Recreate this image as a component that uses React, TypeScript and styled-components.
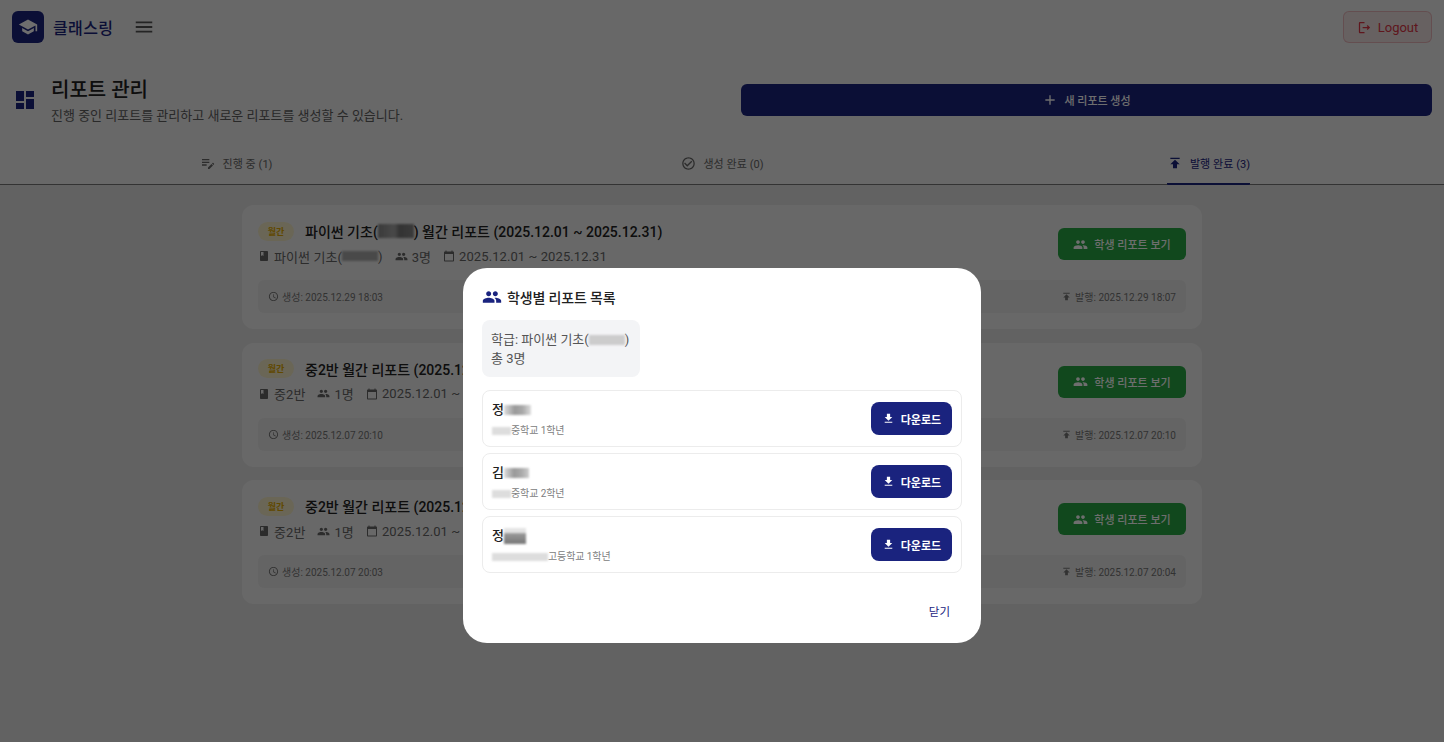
import styled, { createGlobalStyle } from 'styled-components';
import {
  MdAccessTime,
  MdAdd,
  MdBook,
  MdCalendarToday,
  MdCheckCircleOutline,
  MdDashboard,
  MdDownload,
  MdEditNote,
  MdMenu,
  MdOutlineLogout,
  MdPeople,
  MdPublish,
  MdSchool,
} from 'react-icons/md';

const NAVY = '#1a237e';
const FONT = 'Roboto, "Noto Sans CJK KR", sans-serif';

const GlobalStyle = createGlobalStyle`
  html, body {
    margin: 0;
    padding: 0;
    background: #e4e4e4;
    font-family: ${FONT};
    overflow: hidden;
  }
  * {
    box-sizing: border-box;
  }
`;

const Page = styled.div`
  width: 1444px;
  height: 742px;
  display: flex;
  flex-direction: column;
`;

const TopArea = styled.div`
  background: #f0f0f0;
  border-bottom: 1px solid #777;
  height: 185px;
  display: flex;
  flex-direction: column;
`;

// 헤더
const Header = styled.header`
  height: 54px;
  display: flex;
  align-items: center;
  justify-content: space-between;
  padding: 0 12px;
`;

const Brand = styled.div`
  display: flex;
  align-items: center;
`;

const LogoBox = styled.div`
  width: 32px;
  height: 32px;
  border-radius: 6px;
  background: ${NAVY};
  color: #fff;
  display: flex;
  align-items: center;
  justify-content: center;
`;

const BrandName = styled.span`
  margin-left: 9px;
  font-size: 16px;
  font-weight: 500;
  letter-spacing: 0.4px;
  color: ${NAVY};
`;

const MenuButton = styled.div`
  margin-left: 20px;
  color: #555;
  display: flex;
`;

const LogoutButton = styled.div`
  width: 89px;
  height: 32px;
  border-radius: 6px;
  border: 1px solid rgba(220, 53, 69, 0.25);
  background: rgba(220, 53, 69, 0.08);
  color: #dc3545;
  font-size: 13px;
  display: flex;
  align-items: center;
  justify-content: center;
  gap: 6px;
`;

// 페이지 제목
const TitleRow = styled.div`
  height: 92px;
  display: flex;
  align-items: flex-start;
  padding: 23px 12px 0 15px;
`;

const TitleIcon = styled.div`
  color: ${NAVY};
  width: 36px;
  margin-top: 13px;
  display: flex;
`;

const TitleBlock = styled.div`
  width: 690px;
  display: flex;
  flex-direction: column;
`;

const PageTitle = styled.h1`
  margin: 0;
  font-size: 20px;
  font-weight: 500;
  line-height: 26px;
  color: #212121;
`;

const PageSubtitle = styled.p`
  margin: 3px 0 0;
  font-size: 13px;
  line-height: 20px;
  color: #5f5f5f;
`;

const CreateButton = styled.div`
  flex: 1;
  height: 32px;
  margin-top: 7px;
  border-radius: 6px;
  background: ${NAVY};
  color: #fff;
  font-size: 11px;
  font-weight: 500;
  display: flex;
  align-items: center;
  justify-content: center;
  gap: 6px;
`;

// 탭
const TabBar = styled.div`
  flex: 1;
  display: grid;
  grid-template-columns: 472px 501px 471px;
`;

const TabCell = styled.div`
  display: flex;
  justify-content: center;
`;

const Tab = styled.div<{ $active?: boolean }>`
  display: flex;
  align-items: center;
  gap: 7px;
  font-size: 11px;
  letter-spacing: 0.05px;
  color: ${p => (p.$active ? NAVY : '#666')};
  border-bottom: 2px solid ${p => (p.$active ? NAVY : 'transparent')};
  margin-bottom: -1px;
  border-radius: 0 0 1px 1px;
  padding-bottom: 3px;
`;

// 리포트 카드
const CardList = styled.main`
  display: flex;
  flex-direction: column;
  gap: 13.5px;
  width: 960px;
  margin: 20px 0 0 242px;
`;

const Card = styled.article`
  height: 124px;
  border-radius: 12px;
  background: #f2f2f2;
  padding: 16px;
  display: flex;
  flex-direction: column;
`;

const CardTop = styled.div`
  display: flex;
  justify-content: space-between;
  height: 59px;
`;

const CardInfo = styled.div`
  display: flex;
  flex-direction: column;
`;

const CardTitleRow = styled.div`
  display: flex;
  align-items: center;
  height: 20px;
  gap: 11px;
`;

const Badge = styled.span`
  width: 36px;
  height: 19px;
  border-radius: 10px;
  background: #f5ecc8;
  color: #e0a800;
  font-size: 9px;
  font-weight: 700;
  display: flex;
  align-items: center;
  justify-content: center;
`;

const CardTitle = styled.span`
  font-size: 14px;
  font-weight: 500;
  color: #212121;
  white-space: nowrap;
  display: flex;
  align-items: center;
`;

const MetaRow = styled.div`
  display: flex;
  align-items: center;
  margin-top: 5px;
  gap: 12px;
  height: 20px;
  font-size: 13px;
  letter-spacing: 0.08px;
  color: #666;
`;

const MetaItem = styled.span`
  display: flex;
  align-items: center;
  gap: 4px;
`;

const ViewButton = styled.div`
  width: 128px;
  height: 32px;
  margin-top: 7px;
  border-radius: 6px;
  background: #28a745;
  color: #fff;
  font-size: 11px;
  font-weight: 500;
  display: flex;
  align-items: center;
  justify-content: center;
  gap: 6px;
`;

const CardFooter = styled.div`
  height: 33px;
  border-radius: 6px;
  background: #e8e8e8;
  padding: 0 10px;
  display: flex;
  align-items: center;
  justify-content: space-between;
  font-size: 10px;
  color: #757575;
`;

const FooterItem = styled.span`
  display: flex;
  align-items: center;
  gap: 3px;
`;

// 모달
const Backdrop = styled.div`
  position: fixed;
  inset: 0;
  background: rgba(0, 0, 0, 0.57);
  display: flex;
  justify-content: center;
  align-items: flex-start;
  padding-top: 268px;
`;

const Modal = styled.section`
  width: 518px;
  height: 375px;
  border-radius: 24px;
  background: #fff;
  padding: 19px 19px 0;
  display: flex;
  flex-direction: column;
`;

const ModalTitle = styled.h2`
  margin: 0;
  height: 20px;
  font-size: 14px;
  font-weight: 500;
  letter-spacing: -0.15px;
  color: #212121;
  display: flex;
  align-items: center;
  gap: 5px;

  svg {
    color: ${NAVY};
  }
`;

const ClassInfo = styled.div`
  align-self: flex-start;
  width: 158px;
  height: 57px;
  margin-top: 13px;
  border-radius: 8px;
  background: #f3f4f6;
  padding: 10px 9px;
  font-size: 13px;
  line-height: 19px;
  color: #555;
`;

const InfoLine = styled.div`
  display: flex;
  align-items: center;
  white-space: nowrap;
`;

const StudentList = styled.div`
  margin-top: 13px;
  display: flex;
  flex-direction: column;
  gap: 6px;
`;

const StudentRow = styled.div`
  height: 57px;
  border: 1px solid #ececec;
  border-radius: 8px;
  padding: 0 9px;
  display: flex;
  align-items: center;
  justify-content: space-between;
`;

const StudentText = styled.div`
  padding-top: 2px;
`;

const StudentName = styled.div`
  font-size: 13px;
  font-weight: 500;
  line-height: 18px;
  color: #212121;
  display: flex;
  align-items: center;
`;

const StudentSchool = styled.div`
  margin-top: 5px;
  font-size: 10px;
  line-height: 14px;
  letter-spacing: -0.1px;
  color: #808080;
  display: flex;
  align-items: center;
`;

const DownloadButton = styled.div`
  width: 81px;
  height: 33px;
  border-radius: 8px;
  background: ${NAVY};
  color: #fff;
  font-size: 11px;
  font-weight: 700;
  display: flex;
  align-items: center;
  justify-content: center;
  gap: 6px;
`;

const ModalActions = styled.div`
  display: flex;
  justify-content: flex-end;
  padding: 31px 12px 0 0;
`;

const CloseButton = styled.div`
  font-size: 11.5px;
  line-height: 16px;
  color: ${NAVY};
`;

// 개인정보 가림 처리
const Mosaic = styled.span<{ $w: number; $h: number; $tone: string }>`
  display: inline-block;
  width: ${p => p.$w}px;
  height: ${p => p.$h}px;
  background: ${p => p.$tone};
  filter: blur(1.2px);
  flex-shrink: 0;
`;

const reports = [
  {
    title: (
      <>
        파이썬 기초(
        <Mosaic $w={36} $h={14} $tone="linear-gradient(90deg, #888, #aaa 45%, #777 60%, #888)" />) 월간 리포트
        (2025.12.01 ~ 2025.12.31)
      </>
    ),
    className: (
      <>
        파이썬 기초(
        <Mosaic $w={36} $h={10} $tone="#aaa" />)
      </>
    ),
    count: '3명',
    created: '2025.12.29 18:03',
    published: '2025.12.29 18:07',
  },
  {
    title: <>중2반 월간 리포트 (2025.12.01 ~ 2025.12.31)</>,
    className: <>중2반</>,
    count: '1명',
    created: '2025.12.07 20:10',
    published: '2025.12.07 20:10',
  },
  {
    title: <>중2반 월간 리포트 (2025.12.01 ~ 2025.12.31)</>,
    className: <>중2반</>,
    count: '1명',
    created: '2025.12.07 20:03',
    published: '2025.12.07 20:04',
  },
];

const students = [
  { name: '정', nameW: 27, nameH: 10, nameTone: 'linear-gradient(90deg, #ddd, #999 40%, #aaa 70%, #ddd)', school: '중학교 1학년', schoolW: 19 },
  { name: '김', nameW: 25, nameH: 10, nameTone: 'linear-gradient(90deg, #ddd, #999 40%, #aaa 70%, #ccc)', school: '중학교 2학년', schoolW: 19 },
  { name: '정', nameW: 22, nameH: 16, nameTone: 'linear-gradient(#e4e4e4 30%, #999 35%, #777)', school: '고등학교 1학년', schoolW: 56 },
];

export default function App() {
  return (
    <>
      <GlobalStyle />
      <Page>
        <TopArea>
          <Header>
            <Brand>
              <LogoBox>
                <MdSchool size={20} />
              </LogoBox>
              <BrandName>클래스링</BrandName>
              <MenuButton>
                <MdMenu size={22} />
              </MenuButton>
            </Brand>
            <LogoutButton>
              <MdOutlineLogout size={15} />
              Logout
            </LogoutButton>
          </Header>
          <TitleRow>
            <TitleIcon>
              <MdDashboard size={24} style={{ margin: '-2px' }} />
            </TitleIcon>
            <TitleBlock>
              <PageTitle>리포트 관리</PageTitle>
              <PageSubtitle>진행 중인 리포트를 관리하고 새로운 리포트를 생성할 수 있습니다.</PageSubtitle>
            </TitleBlock>
            <CreateButton>
              <MdAdd size={16} />새 리포트 생성
            </CreateButton>
          </TitleRow>
          <TabBar>
            <TabCell>
              <Tab>
                <MdEditNote size={16} />
                진행 중 (1)
              </Tab>
            </TabCell>
            <TabCell>
              <Tab>
                <MdCheckCircleOutline size={15} />
                생성 완료 (0)
              </Tab>
            </TabCell>
            <TabCell>
              <Tab $active>
                <MdPublish size={16} />
                발행 완료 (3)
              </Tab>
            </TabCell>
          </TabBar>
        </TopArea>
        <CardList>
          {reports.map((r, i) => (
            <Card key={i}>
              <CardTop>
                <CardInfo>
                  <CardTitleRow>
                    <Badge>월간</Badge>
                    <CardTitle>{r.title}</CardTitle>
                  </CardTitleRow>
                  <MetaRow>
                    <MetaItem>
                      <MdBook size={12} />
                      <span style={{ display: 'flex', alignItems: 'center' }}>{r.className}</span>
                    </MetaItem>
                    <MetaItem>
                      <MdPeople size={13} />
                      {r.count}
                    </MetaItem>
                    <MetaItem>
                      <MdCalendarToday size={12} />
                      2025.12.01 ~ 2025.12.31
                    </MetaItem>
                  </MetaRow>
                </CardInfo>
                <ViewButton>
                  <MdPeople size={15} />
                  학생 리포트 보기
                </ViewButton>
              </CardTop>
              <CardFooter>
                <FooterItem>
                  <MdAccessTime size={11} />
                  생성: {r.created}
                </FooterItem>
                <FooterItem>
                  <MdPublish size={11} />
                  발행: {r.published}
                </FooterItem>
              </CardFooter>
            </Card>
          ))}
        </CardList>
      </Page>
      <Backdrop>
        <Modal>
          <ModalTitle>
            <MdPeople size={20} />
            학생별 리포트 목록
          </ModalTitle>
          <ClassInfo>
            <InfoLine>
              학급: 파이썬 기초(
              <Mosaic $w={36} $h={10} $tone="#ccc" />)
            </InfoLine>
            <InfoLine>총 3명</InfoLine>
          </ClassInfo>
          <StudentList>
            {students.map((s, i) => (
              <StudentRow key={i}>
                <StudentText>
                  <StudentName>
                    {s.name}
                    <Mosaic $w={s.nameW} $h={s.nameH} $tone={s.nameTone} />
                  </StudentName>
                  <StudentSchool>
                    <Mosaic $w={s.schoolW} $h={8} $tone="#ddd" />
                    {s.school}
                  </StudentSchool>
                </StudentText>
                <DownloadButton>
                  <MdDownload size={13} />
                  다운로드
                </DownloadButton>
              </StudentRow>
            ))}
          </StudentList>
          <ModalActions>
            <CloseButton>닫기</CloseButton>
          </ModalActions>
        </Modal>
      </Backdrop>
    </>
  );
}
